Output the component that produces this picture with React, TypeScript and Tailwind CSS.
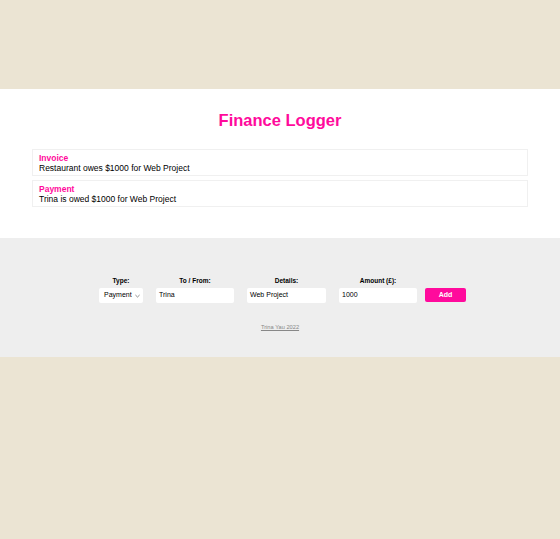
export default function App() {
  return (
    <div className="min-h-screen bg-[#ebe4d3] font-['Liberation_Sans',Arial,sans-serif]">
      <div className="h-[89px]" />

      {/* LIST */}
      <div className="bg-white h-[149px] pt-[21px] box-border">
        <h1 className="text-center text-[16.5px] leading-[20px] font-bold text-[#ff0a9c]">
          Finance Logger
        </h1>
        <ul className="mt-[19px] mx-[32px] flex flex-col gap-[4px]">
          <li className="border border-[#f0f0f0] px-[6px] py-[2.5px] text-[8.5px] leading-[10px] text-black">
            <div className="font-bold text-[#ff0a9c]">Invoice</div>
            <div>Restaurant owes $1000 for Web Project</div>
          </li>
          <li className="border border-[#f0f0f0] px-[6px] py-[2.5px] text-[8.5px] leading-[10px] text-black">
            <div className="font-bold text-[#ff0a9c]">Payment</div>
            <div>Trina is owed $1000 for Web Project</div>
          </li>
        </ul>
      </div>

      {/* FORM */}
      <div className="bg-[#eeeeee] h-[119px] pt-[39px] box-border">
        <form className="flex justify-center items-end gap-[13px] pl-[5px]">
          <div className="flex flex-col items-center gap-[3px]">
            <label className="text-[6.5px] leading-[8px] font-bold">Type:</label>
            <div className="w-[44px] h-[15px] bg-white rounded-[2px] flex items-center justify-between pl-[5px] pr-[3px] text-[7px]">
              <span>Payment</span>
              <svg width="5" height="4" viewBox="0 0 6 4" fill="none" stroke="#555" strokeWidth="0.8">
                <path d="M0.5 0.8 L3 3.2 L5.5 0.8" />
              </svg>
            </div>
          </div>
          <div className="flex flex-col items-center gap-[3px]">
            <label className="text-[6.5px] leading-[8px] font-bold">To / From:</label>
            <div className="w-[78px] h-[15px] bg-white rounded-[2px] flex items-center px-[3px] text-[7px]">
              Trina
            </div>
          </div>
          <div className="flex flex-col items-center gap-[3px]">
            <label className="text-[6.5px] leading-[8px] font-bold">Details:</label>
            <div className="w-[79px] h-[15px] bg-white rounded-[2px] flex items-center px-[3px] text-[7px]">
              Web Project
            </div>
          </div>
          <div className="flex flex-col items-center gap-[3px]">
            <label className="text-[6.5px] leading-[8px] font-bold">Amount (£):</label>
            <div className="w-[78px] h-[15px] bg-white rounded-[2px] flex items-center px-[3px] text-[7px]">
              1000
            </div>
          </div>
          <button
            type="button"
            className="w-[41px] h-[14px] mb-[1px] -ml-[5px] bg-[#ff0a9c] rounded-[2px] text-white text-[7px] font-bold"
          >
            Add
          </button>
        </form>
        <div className="mt-[17px] text-center leading-[8px]">
          <a className="text-[5.7px] text-[#888] underline">Trina Yau 2022</a>
        </div>
      </div>
    </div>
  );
}
